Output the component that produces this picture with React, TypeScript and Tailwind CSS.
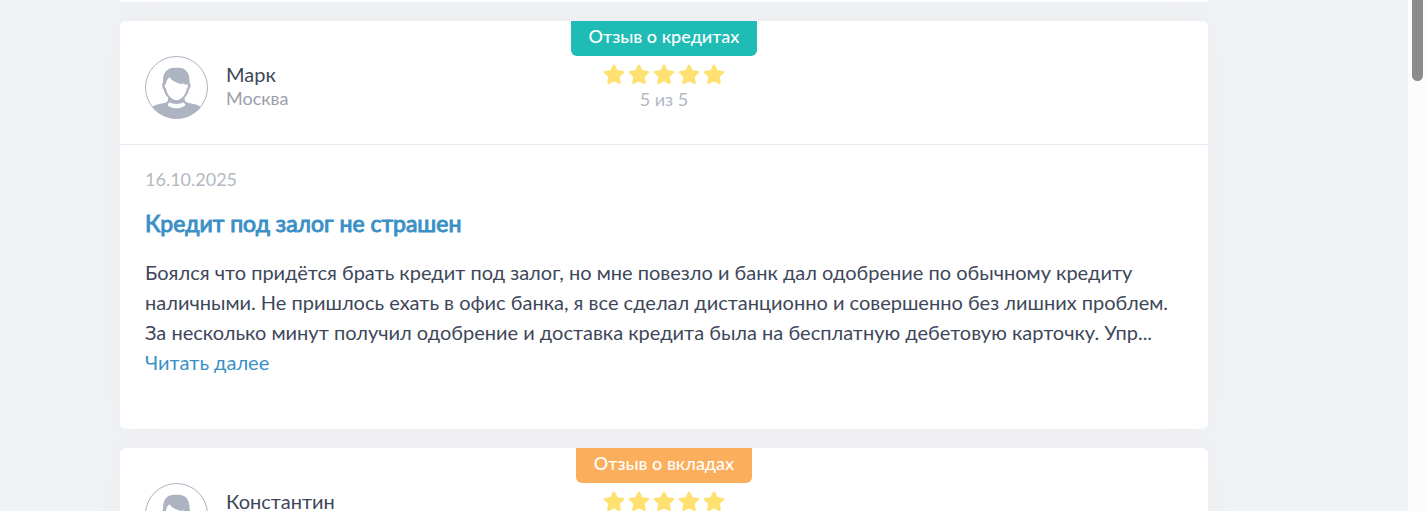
import clsx from 'clsx'

const reviews = [
  {
    id: 1,
    name: 'Марк',
    city: 'Москва',
    tag: 'Отзыв о кредитах',
    tagColor: 'bg-[#1ebcb5]',
    rating: 5,
    date: '16.10.2025',
    title: 'Кредит под залог не страшен',
    text: 'Боялся что придётся брать кредит под залог, но мне повезло и банк дал одобрение по обычному кредиту ' +
      'наличными. Не пришлось ехать в офис банка, я все сделал дистанционно и совершенно без лишних проблем. ' +
      'За несколько минут получил одобрение и доставка кредита была на бесплатную дебетовую карточку. Упр...',
  },
  {
    id: 2,
    name: 'Константин',
    tag: 'Отзыв о вкладах',
    tagColor: 'bg-[#fbae5c]',
    rating: 5,
  },
]

type Review = {
  id: number
  name: string
  city?: string
  tag: string
  tagColor: string
  rating: number
  date?: string
  title?: string
  text?: string
}

function Avatar() {
  return (
    <svg className="size-[63px] shrink-0" viewBox="0 0 63 63" aria-hidden="true">
      <clipPath id="avatar-clip">
        <circle cx="31.5" cy="31.5" r="31" />
      </clipPath>
      <g clipPath="url(#avatar-clip)">
        <path
          fill="#adb3c0"
          d="M0 63V56.5C6 50.500 11 48.300 18 47.200C22.500 46.500 23.500 45 23 41.500C20.500 39.200 19.300 36.800 18.900 33.800C17.500 32.800 16.900 30.500 17.200 28.500C17.500 27.500 17.800 27.200 18 26.500C17.600 18.500 20.500 12 29.500 11.800H33.500C42 12 45 18.500 44.600 26.500C44.900 27.200 45.200 27.500 45.500 28.500C45.800 30.500 45.100 32.800 43.800 33.800C43.400 36.800 42.200 39.200 39.700 41.500C39.300 45 40.500 46.500 45 47.200C52 48.300 57 50.500 63 56.500V63Z"
        />
        <path
          fill="#fff"
          d="M24.300 21.200C27.500 25.200 32.500 27.500 38 28.400L35.200 25.200C37.500 27.300 39.500 28.600 41.800 28.800L43 28.300C43.200 30 42.800 31.800 41.800 32.600C41 38 37 44.200 31.400 44.200C25.800 44.200 21.800 38 21 32.600C20 31.800 19.500 30 19.700 28.300L20.900 28.800C21 26 22 23 24.300 21.200Z"
        />
        <path fill="#fff" d="M24.300 46.300C28.500 48.500 34.500 48.500 38.700 46.300L40.500 49.200C36 53.300 27 53.300 22.500 49.200Z" />
      </g>
      <circle cx="31.5" cy="31.5" r="31" fill="none" stroke="#adb3c0" />
    </svg>
  )
}

function Stars({count}: {count: number}) {
  return (
    <div className="flex gap-[3px]">
      {Array.from({length: count}, (_, i) => (
        <svg key={i} className="h-[21px] w-[22px]" viewBox="0 0 22 21" aria-hidden="true">
          <path
            fill="#ffe171"
            stroke="#ffe171"
            strokeWidth="2.4"
            strokeLinejoin="round"
            d="M11 1.800L13.700 7.300L20 8.200L15.500 12.500L16.600 18.900L11 16L5.400 18.900L6.500 12.500L2 8.200L8.300 7.300Z"
          />
        </svg>
      ))}
    </div>
  )
}

function ReviewCard({review}: {review: Review}) {
  return (
    <article className="rounded-md bg-white shadow-[0_0_30px_2px_#eeecef]">
      <header className="grid grid-cols-[1fr_auto_1fr] border-b border-[#e6eaef] px-[25px]">
        <div className="flex gap-[18px] pt-[35px] pb-[25px]">
          <Avatar />
          <div className="pt-1.5">
            <div className="text-xl leading-6 text-[#3e475a]">{review.name}</div>
            <div className="text-lg leading-6 text-[#9a9fa9]">{review.city}</div>
          </div>
        </div>
        <div className="flex flex-col items-center">
          <span className={clsx('mb-2 h-[35px] rounded-b-md px-[18px] text-lg leading-[30px] font-medium text-white', review.tagColor)}>
            {review.tag}
          </span>
          <Stars count={review.rating} />
          <span className="mt-0.5 text-lg leading-6 text-[#b3b8c5]">{review.rating} из 5</span>
        </div>
      </header>
      {review.text && (
        <div className="px-[25px] pt-[19px] pb-[52px]">
          <time className="block text-lg leading-[30px] text-[#b3b8c2]">{review.date}</time>
          <h2 className="mt-[14px] text-[23px] leading-[30px] font-normal text-[#3b90c6] [-webkit-text-stroke:1px_#3b90c6]">{review.title}</h2>
          <p className="mt-[19px] text-xl leading-[30px] text-[#3e475a]">{review.text}</p>
          <a href="#review" className="text-xl leading-[30px] text-[#3b90c6]">Читать далее</a>
        </div>
      )}
    </article>
  )
}

export default function App() {
  return (
    <div className="flex h-screen overflow-hidden bg-[#eff3f6] font-['Lato','Liberation_Sans',sans-serif]">
      <main className="flex flex-1 flex-col gap-[19px] pr-[200px] pl-[120px]">
        <div className="h-0.5 shrink-0 rounded-b-md bg-white shadow-[0_0_30px_2px_#eeecef]"></div>
        {reviews.map((review) => (
          <ReviewCard key={review.id} review={review} />
        ))}
      </main>
      <div className="w-[19px] bg-[#fcfcfc] px-1">
        <div className="h-[81px] w-[11px] rounded-b-full bg-[#8b8b8b]"></div>
      </div>
    </div>
  )
}
